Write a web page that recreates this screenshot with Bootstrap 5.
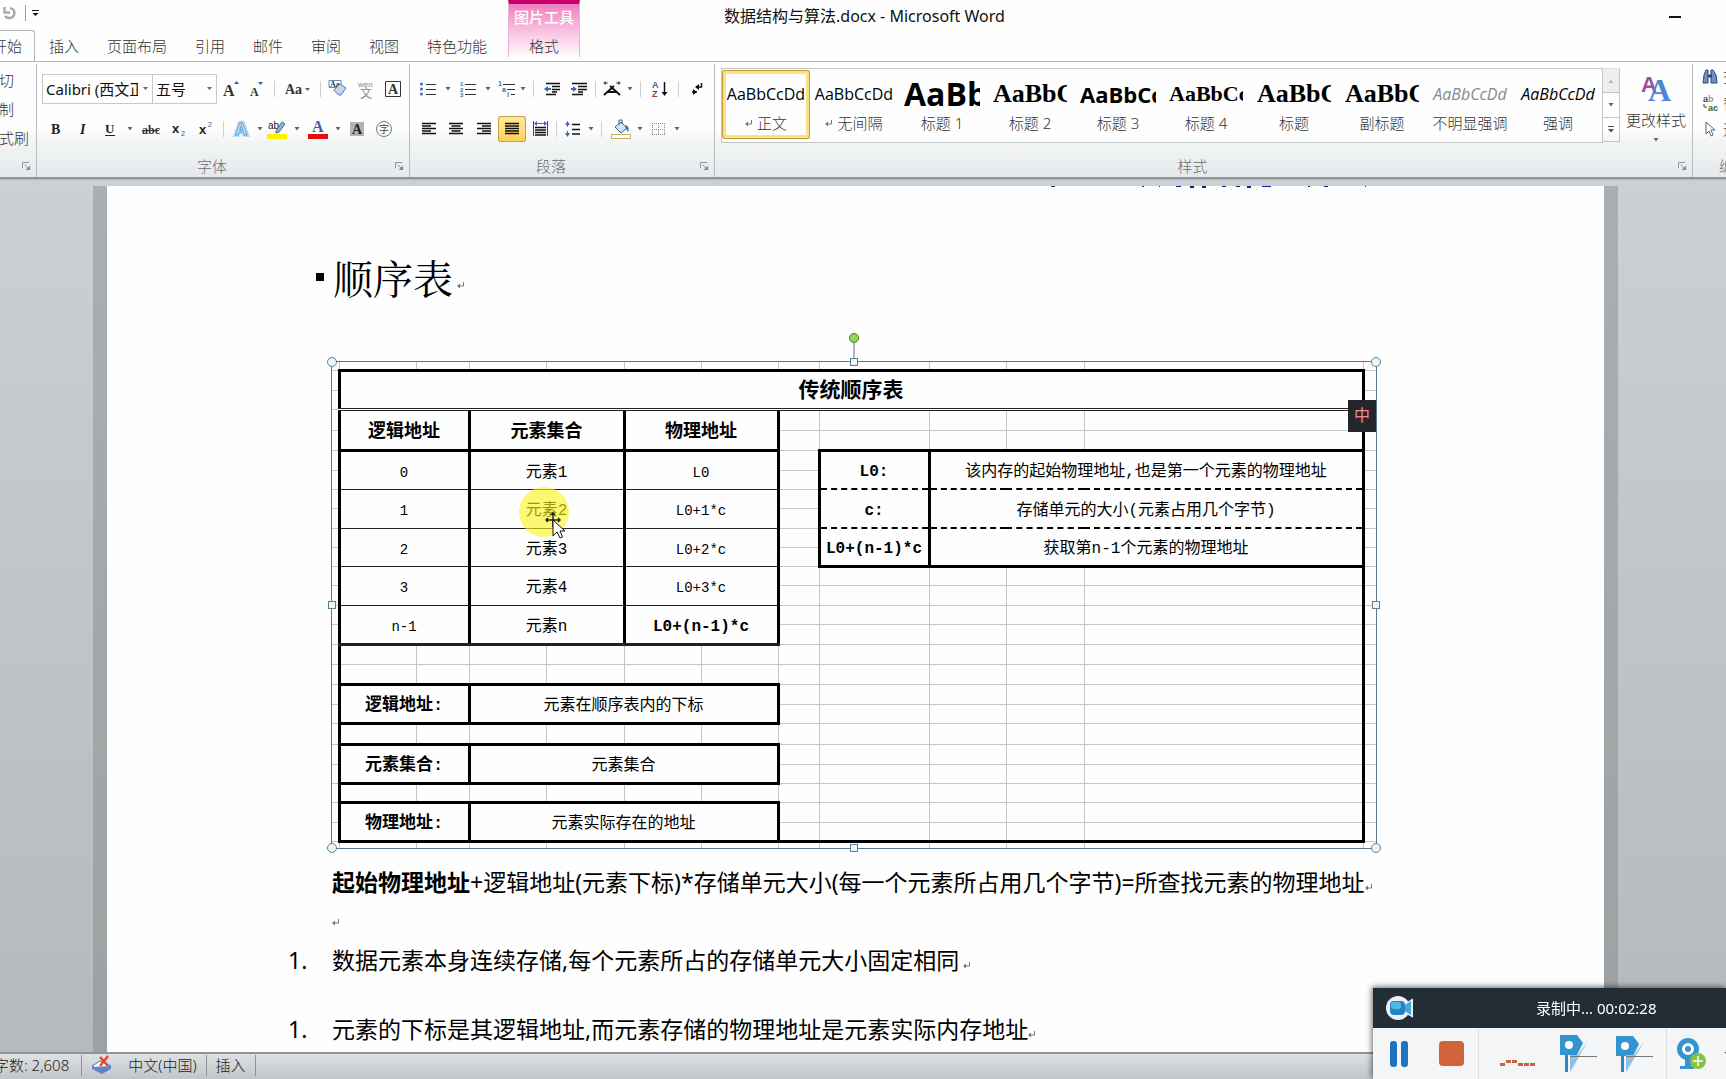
<!DOCTYPE html>
<html lang="zh-CN">
<head>
<meta charset="utf-8">
<meta name="viewport" content="width=device-width, initial-scale=1">
<title>数据结构与算法.docx - Microsoft Word</title>
<link href="https://cdn.jsdelivr.net/npm/bootstrap@5.3.0/dist/css/bootstrap.min.css" rel="stylesheet">
<style>
  body { font-family: "Noto Sans", "Noto Sans CJK SC", sans-serif; font-size: 15px; line-height: 20px; color: #333; background: #fdfefd; }
  button { font: inherit; color: inherit; background: none; border: 0; padding: 0; }
  svg { display: block; flex: none; }
  .cjk { font-family: "Noto Sans", "Noto Sans CJK SC", sans-serif; font-weight: 300; }

  /* title bar and tabs */
  .titlebar { display: grid; grid-template-columns: 508px 72px 1fr; height: 62px; border-bottom: 1px solid #b4b6b8; }
  .tabs { gap: 28px; height: 31px; }
  .tabs a, .ctx a { color: #333; text-decoration: none; white-space: nowrap; padding-top: 6px; }
  .tabs .tab-home { width: 35px; height: 32px; border: 1px solid #b4b6b8; border-left: 0; border-bottom: 0; border-top-right-radius: 3px; background: #fdfefd; padding: 5px 12px 0 0; display: flex; justify-content: flex-end; overflow: hidden; margin-right: -14px; }
  .ctx { background: linear-gradient(#f07ebd, #f9bfe0 50%, #fdf3f9 92%, #fdfefd); border-top: 4px solid #c8006e; border-left: 1px solid #e6b3d0; border-right: 1px solid #e6b3d0; height: 57px; }
  .ctx strong { color: #fff; font-weight: 500; line-height: 26px; }
  .doc-title { color: #111; padding: 6px 0 0 144px; font-size: 16px; }
  .win-min { width: 12px; height: 2px; background: #111; margin: 16px 45px 0 0; }

  /* ribbon */
  .ribbon { height: 117px; background: linear-gradient(#fdfefd 0, #fdfefd 58%, #f2f4f5 70%, #e6e9eb 100%); border-bottom: 2px solid #8f9498; overflow: hidden; }
  .grp { border-right: 1px solid #b9bcc0; height: 113px; margin-top: 2px; flex: none; }
  .grp-body { height: 90px; }
  .tools { padding: 10px 0 0 5px; }
  .grp-foot { height: 24px; color: #6a6f75; padding-right: 5px; }
  .tool-row { height: 30px; }
  .tool-row + .tool-row { margin-top: 10px; }
  .tool-row button { height: 26px; display: flex; align-items: center; justify-content: center; }
  .tool-on { background: linear-gradient(#ffe9a0, #ffd257); border-radius: 3px; box-shadow: inset 0 0 0 1px #c9a04a; }
  .tool-sep { width: 1px; height: 16px; background: #cdd0d3; flex: none; }
  .clip-item { height: 29px; line-height: 29px; white-space: nowrap; }
  .edit-item { height: 26px; gap: 4px; }
  .combo { height: 30px; border: 1px solid #c6c9cc; background: #fff; font-size: 15px; font-weight: 400; color: #111; appearance: none; border-radius: 0; padding: 0 14px 0 3px;
    background: url("data:image/svg+xml,%3Csvg xmlns='http://www.w3.org/2000/svg' width='6' height='4'%3E%3Cpath d='M0 0h5L2.5 3z' fill='%23666'/%3E%3C/svg%3E") no-repeat right 3px center; }
  .gallery { border: 1px solid #c3c6c9; height: 75px; width: 882px; margin-top: 4px; background: #fdfefd; }
  .style-item { width: 88px; height: 69px; margin-top: 1px; display: flex; flex-direction: column; align-items: center; flex: none; }
  .style-on { border-radius: 3px; box-shadow: inset 0 0 0 1px #c29b34, inset 0 0 0 4px #fbe08a; }
  .pv { width: 74px; height: 42px; overflow: hidden; white-space: nowrap; color: #000; line-height: 48px; text-align: left; }
  .pv-open { font-family: "Open Sans", sans-serif; font-weight: 400; width: 76px; }
  .pv-name { font-size: 16px; width: 80px; text-align: center; }
  .pv-serif { font-family: "Liberation Serif", serif; font-weight: 700; }
  .fs-h1 { font-size: 32px; } .fs-h2 { font-size: 26px; } .fs-h3 { font-size: 22px; }
  .style-item small { font-size: 15px; line-height: 22px; color: #333; }
  .gal-scroll { width: 17px; height: 74px; margin-top: 4px; }
  .gal-scroll button { border: 1px solid #c3c6c9; border-left: 0; border-top: 0; flex: 1; display: flex; align-items: center; justify-content: center; }

  /* workspace */
  .work { background: linear-gradient(#ccd0d5, #b5b9bc); border-top: 1px solid #b4b8bc; padding: 6px 108px 0 93px; }
  .sheet { background: #fdfefd; background-clip: padding-box; border: 14px solid rgba(120, 124, 126, .4); border-width: 0 14px; padding-left: 225px; color: #000; overflow: hidden; }
  .head-line { font-family: "Noto Serif CJK SC", "Noto Sans CJK SC", serif; font-weight: 400; font-size: 40px; line-height: 56px; margin: 60px 0 56px -16px; }
  .bullet { width: 8px; height: 8px; background: #000; margin-right: 9px; }
  .para { font-size: 23px; line-height: 39px; white-space: nowrap; margin: 0; font-weight: 400; }
  .num { width: 44px; margin-left: -44px; flex: none; }

  .pic { position: relative; width: fit-content; border: 1px solid #5f7486; margin-bottom: 14px; margin-left: -1px; }
  .cells { border-collapse: collapse; table-layout: fixed; width: 1044px; color: #000; font-family: "Liberation Mono", "Noto Sans CJK SC", monospace; font-size: 16px; line-height: 22px; }
  .cells td { border: 1px solid #c4c5c5; padding: 5px 0 0; text-align: center; vertical-align: middle; font-weight: 400; white-space: nowrap; }
  .cells tr:first-child td, .cells tr:last-child td { padding: 0; }
  .cells tr:first-child td { border-top: 0; } .cells tr:last-child td { border-bottom: 0; }
  .cells .edge-l { border-left: 0; } .cells .edge-r { border-right: 0; }
  .cells .box { border: 3px solid #000; }
  .cells .thin { border: 3px solid #000; border-width: 1px 3px; border-top-color: #222; border-bottom-color: #222; }
  .cells .thin-first { border-top-width: 3px; } .cells .thin-last { border-bottom-width: 3px; }
  .cells .wl { border-left: 3px solid #000; } .cells .wr { border-right: 3px solid #000; } .cells .wb { border-bottom: 3px solid #000; }
  .cells .dbl { border-bottom: 3px double #222; } .cells .dbl-t { border-top: 3px double #222; }
  .cells .dash-b { border-bottom: 2px dashed #000; } .cells .dash-t { border-top: 2px dashed #000; }
  .cells .t-title { font-size: 21px; font-weight: 700; }
  .cells .t-head { font-size: 18px; font-weight: 700; }
  .cells .t-label { font-size: 17px; font-weight: 700; }
  .cells .t-bold { font-weight: 700; font-size: 16px; }
  .cells .t-code { font-size: 14px; }
  .hnd { position: absolute; width: 10px; height: 10px; border: 1px solid #5f7f92; background: #eaf6fa; transform: translate(-50%, -50%); }
  .hnd-r { border-radius: 50%; }
  .hnd-rot { position: absolute; left: 50%; top: -30px; transform: translateX(-50%); }
  .spot { position: absolute; left: 187px; top: 125px; width: 50px; height: 50px; border-radius: 50%; background: rgba(250, 244, 30, .62); }
  .cursor { position: absolute; left: 212px; top: 150px; }
  .ime { position: absolute; right: 0; top: 38px; width: 28px; height: 32px; background: #25262c; color: #ee8d92; text-align: center; line-height: 31px; font-size: 16px; }

  /* status bar */
  .status { height: 27px; background: linear-gradient(#dfe2e4, #c1c5c8); border-top: 2px solid #8f9498; color: #222; white-space: nowrap; line-height: 20px; padding-bottom: 3px; }
  .status .st-sep { width: 1px; height: 21px; background: #8d9195; }

  /* recorder */
  .rec { position: fixed; right: 0; bottom: 0; width: 353px; height: 91px; overflow: hidden; box-shadow: -1px -1px 6px rgba(0, 0, 0, .6); background: #f3f5f6; }
  .rec-top { height: 40px; background: #222d36; color: #fff; }
</style>
</head>
<body class="vh-100 overflow-hidden d-flex flex-column">

<svg width="0" height="0" class="position-absolute">
  <symbol id="caret" viewBox="0 0 6 4"><path d="M.5 0h5L3 3.5z" fill="#666"/></symbol>
  <symbol id="launch" viewBox="0 0 10 10"><path d="M.5 7V.5H8" fill="none" stroke="#888"/><path d="M3 3l4 4" stroke="#888"/><path d="M9 4v5H4z" fill="#888"/></symbol>
  <symbol id="ret" viewBox="0 0 8 8"><path d="M6.500 1v4H2" fill="none" stroke="#777"/><path d="M0 5l3-2.500v5z" fill="#777"/></symbol>
</svg>

<header class="titlebar flex-shrink-0">
  <div class="d-flex flex-column overflow-hidden">
    <div class="d-flex align-items-center" style="height:31px;padding-bottom:4px">
      <button type="button" aria-label="重复" style="margin-left:2px"><svg width="14" height="14" viewBox="0 0 14 14"><path d="M2.500 1v5.500H8" fill="none" stroke="#aaa" stroke-width="2.500"/><path d="M8 2.500C12 2 13 6 12 9c-1 3.500-7 4-9 1" fill="none" stroke="#aaa" stroke-width="2.500"/></svg></button>
      <span class="tool-sep" style="margin-left:9px;background:#999"></span>
      <button type="button" aria-label="自定义" style="margin-left:6px"><svg width="8" height="7" viewBox="0 0 8 7"><path d="M0 0h7v1H0zM.5 3h6L3.500 6z" fill="#111"/></svg></button>
    </div>
    <nav class="tabs cjk d-flex">
      <a class="tab-home" href="#">开始</a>
      <a href="#">插入</a><a href="#">页面布局</a><a href="#">引用</a><a href="#">邮件</a><a href="#">审阅</a><a href="#">视图</a><a href="#">特色功能</a>
    </nav>
  </div>
  <div class="ctx cjk d-flex flex-column align-items-center">
    <strong>图片工具</strong>
    <a href="#">格式</a>
  </div>
  <div class="d-flex justify-content-between align-items-start">
    <div class="doc-title">数据结构与算法.docx - Microsoft Word</div>
    <button type="button" aria-label="最小化" class="win-min"></button>
  </div>
</header>

<section class="ribbon d-flex flex-shrink-0">
  <div class="grp cjk overflow-hidden" style="width:37px">
    <div class="grp-body" style="padding-top:2px">
      <div class="clip-item" style="margin-left:-16px">剪切</div>
      <div class="clip-item" style="margin-left:-16px">复制</div>
      <div class="clip-item" style="margin-left:-16px">格式刷</div>
    </div>
    <div class="grp-foot d-flex align-items-center justify-content-end"><svg width="9" height="9"><use href="#launch"/></svg></div>
  </div>

  <div class="grp" style="width:373px">
    <div class="grp-body tools">
      <div class="tool-row d-flex align-items-center">
        <select class="combo cjk" style="width:111px;margin-right:-1px" aria-label="字体"><option>Calibri (西文正文)</option></select>
        <select class="combo cjk" style="width:65px" aria-label="字号"><option>五号</option></select>
        <button type="button" aria-label="增大字体"><svg width="27" height="20" viewBox="0 0 27 20"><text x="6" y="17" font-family="Liberation Serif" font-weight="700" font-size="16" fill="#333">A</text><path d="M17 5l2.500-3L22 5z" fill="#345a9a"/></svg></button>
        <button type="button" aria-label="缩小字体"><svg width="26" height="20" viewBox="0 0 26 20"><text x="6" y="17" font-family="Liberation Serif" font-weight="700" font-size="12" fill="#333">A</text><path d="M14 3h5l-2.500 3z" fill="#345a9a"/></svg></button>
        <span class="tool-sep mx-1"></span>
        <button type="button" aria-label="更改大小写"><svg width="39" height="20" viewBox="0 0 39 20"><text x="6" y="15" font-family="Liberation Serif" font-weight="700" font-size="14" fill="#333">Aa</text><path d="M26 9h5l-2.500 3z" fill="#666"/></svg></button>
        <span class="tool-sep" style="margin:0 2px"></span>
        <button type="button" aria-label="清除格式"><svg width="30" height="20" viewBox="0 0 30 20"><text x="7" y="8" font-family="Liberation Serif" font-weight="700" font-size="8" fill="#333">Aa</text><path d="M6 1.500h12v7H6z" fill="none" stroke="#6c86b5"/><path d="M11 11l6-6 6 4-5 7q-3 1-7-5z" fill="#c4d4ee" stroke="#5a78ab"/></svg></button>
        <button type="button" aria-label="拼音指南"><svg width="27" height="20" viewBox="0 0 27 20"><text x="5" y="8" font-family="Liberation Sans" font-size="8" fill="#888">wén</text><text x="7" y="19" font-family="Noto Sans CJK SC" font-size="12" fill="#888">文</text></svg></button>
        <button type="button" aria-label="字符边框"><svg width="26" height="20" viewBox="0 0 26 20"><path d="M5.500 2.500h15v15h-15z" fill="#fff" stroke="#334"/><text x="8" y="15" font-family="Liberation Serif" font-weight="700" font-size="14" fill="#333">A</text></svg></button>
      </div>
      <div class="tool-row d-flex align-items-center">
        <button type="button" aria-label="加粗"><svg width="27" height="20"><text x="9" y="15" font-family="Liberation Serif" font-weight="700" font-size="14" fill="#222">B</text></svg></button>
        <button type="button" aria-label="倾斜"><svg width="27" height="20"><text x="11" y="15" font-family="Liberation Serif" font-style="italic" font-weight="700" font-size="14" fill="#222">I</text></svg></button>
        <button type="button" aria-label="下划线"><svg width="27" height="20"><text x="9" y="14" font-family="Liberation Serif" font-weight="700" font-size="13" fill="#222">U</text><path d="M9 16.500h10" stroke="#222"/></svg></button>
        <button type="button" aria-label="下划线选项" style="width:13px"><svg width="6" height="4"><use href="#caret"/></svg></button>
        <button type="button" aria-label="删除线"><svg width="29" height="20"><text x="6" y="15" font-family="Liberation Serif" font-weight="700" font-size="12" fill="#333">abc</text><path d="M6 11.500h17" stroke="#333"/></svg></button>
        <button type="button" aria-label="下标"><svg width="27" height="20"><text x="7" y="14" font-family="Liberation Sans" font-weight="700" font-size="13" fill="#222">x</text><text x="16" y="17" font-family="Liberation Sans" font-size="7" fill="#2f57a0">2</text></svg></button>
        <button type="button" aria-label="上标"><svg width="27" height="20"><text x="7" y="15" font-family="Liberation Sans" font-weight="700" font-size="13" fill="#222">x</text><text x="16" y="8" font-family="Liberation Sans" font-size="7" fill="#2f57a0">2</text></svg></button>
        <span class="tool-sep mx-1"></span>
        <button type="button" aria-label="文本效果"><svg width="27" height="20"><text x="7" y="16" font-family="Liberation Sans" font-weight="700" font-size="17" fill="#fff" stroke="#b7dcf3" stroke-width="4">A</text><text x="7" y="16" font-family="Liberation Sans" font-weight="700" font-size="17" fill="#eef8ff" stroke="#5b9fd0">A</text></svg></button>
        <button type="button" aria-label="文本效果选项" style="width:9px"><svg width="6" height="4"><use href="#caret"/></svg></button>
        <button type="button" aria-label="突出显示"><svg width="26" height="22"><text x="4" y="11" font-family="Liberation Sans" font-size="10" fill="#222">ab</text><path d="M12 13l6-9 3 2-6 8-3 1z" fill="#9db3da" stroke="#47618f"/><path d="M3 16h20v5H3z" fill="#fff200"/></svg></button>
        <button type="button" aria-label="突出显示选项" style="width:13px"><svg width="6" height="4"><use href="#caret"/></svg></button>
        <button type="button" aria-label="字体颜色"><svg width="29" height="22"><text x="9" y="14" font-family="Liberation Serif" font-weight="700" font-size="16" fill="#3b5f9e">A</text><path d="M5 16h20v5H5z" fill="#e60c0c"/></svg></button>
        <button type="button" aria-label="字体颜色选项" style="width:11px"><svg width="6" height="4"><use href="#caret"/></svg></button>
        <button type="button" aria-label="字符底纹"><svg width="28" height="20"><path d="M7 3h14v14H7z" fill="#b3b3b3"/><text x="9" y="15" font-family="Liberation Serif" font-weight="700" font-size="14" fill="#222">A</text></svg></button>
        <button type="button" aria-label="带圈字符"><svg width="26" height="20"><circle cx="13" cy="10" r="7.500" fill="none" stroke="#777"/><text x="8" y="14" font-family="Noto Sans CJK SC" font-size="10" fill="#444">字</text></svg></button>
      </div>
    </div>
    <div class="grp-foot cjk d-flex align-items-center"><span class="flex-fill text-center pe-2">字体</span><svg width="9" height="9"><use href="#launch"/></svg></div>
  </div>

  <div class="grp" style="width:305px">
    <div class="grp-body tools">
      <div class="tool-row d-flex align-items-center">
        <button type="button" aria-label="项目符号"><svg width="26" height="18"><path d="M11 4.500h10M11 9.500h10M11 14.500h10" stroke="#333"/><g fill="#3f69b5"><circle cx="6.500" cy="4" r="1.500"/><circle cx="6.500" cy="9" r="1.500"/><circle cx="6.500" cy="14" r="1.500"/></g></svg></button>
        <button type="button" aria-label="项目符号选项" style="width:13px"><svg width="6" height="4"><use href="#caret"/></svg></button>
        <button type="button" aria-label="编号"><svg width="27" height="18"><path d="M11 4.500h11M11 9.500h11M11 14.500h11" stroke="#333"/><g fill="#3f69b5" font-family="Liberation Sans" font-weight="700" font-size="6"><text x="6" y="6">1</text><text x="6" y="12">2</text><text x="6" y="17">3</text></g></svg></button>
        <button type="button" aria-label="编号选项" style="width:13px"><svg width="6" height="4"><use href="#caret"/></svg></button>
        <button type="button" aria-label="多级列表"><svg width="24" height="18"><path d="M9 4.500h12M13 9.500h8M17 14.500h4" stroke="#333"/><g fill="#3f69b5" font-family="Liberation Sans" font-weight="700" font-size="7"><text x="4" y="6">1</text><text x="8" y="12">a</text><text x="13" y="17">i</text></g></svg></button>
        <button type="button" aria-label="多级列表选项" style="width:10px"><svg width="6" height="4"><use href="#caret"/></svg></button>
        <span class="tool-sep" style="margin:0 5px"></span>
        <button type="button" aria-label="减少缩进"><svg width="27" height="18"><path d="M7 3.500h14M13 6.500h8M13 9.500h8M13 12h5M7 14.500h10" stroke="#111" stroke-width="1.500"/><path d="M5 9l4-3v6z" fill="#3f69b5"/><path d="M8 9h4" stroke="#3f69b5" stroke-width="2"/></svg></button>
        <button type="button" aria-label="增加缩进"><svg width="26" height="18"><path d="M6 3.500h15M12 6.500h9M12 9.500h9M12 12h5M6 14.500h11" stroke="#111" stroke-width="1.500"/><path d="M11 9L7 6v6z" fill="#3f69b5"/><path d="M5 9h4" stroke="#3f69b5" stroke-width="2"/></svg></button>
        <span class="tool-sep" style="margin:0 3px"></span>
        <button type="button" aria-label="中文版式"><svg width="26" height="18"><path d="M5 15L15 6M21 15L11 6M9 12h8" stroke="#111" stroke-width="2"/><path d="M5 3h4M17 3h4" stroke="#3c4c80"/><path d="M4 3l3-2v4zM22 3l-3-2v4z" fill="#3c4c80"/></svg></button>
        <button type="button" aria-label="中文版式选项" style="width:10px"><svg width="6" height="4"><use href="#caret"/></svg></button>
        <span class="tool-sep" style="margin:0 5px"></span>
        <button type="button" aria-label="排序"><svg width="28" height="18"><g font-family="Liberation Sans" font-weight="700" font-size="9"><text x="6" y="8" fill="#3f69b5">A</text><text x="6" y="17" fill="#9b3a35">Z</text></g><path d="M18.500 2v12" stroke="#111" stroke-width="1.500"/><path d="M15.500 12h6l-3 4z" fill="#111"/></svg></button>
        <span class="tool-sep mx-1"></span>
        <button type="button" aria-label="显示编辑标记"><svg width="28" height="18"><path d="M18.500 3v4H13M14 12H9" fill="none" stroke="#111" stroke-width="1.500"/><path d="M12 7l4-3v6zM14 12l-4-3v6z" fill="#111"/></svg></button>
      </div>
      <div class="tool-row d-flex align-items-center">
        <button type="button" aria-label="左对齐"><svg width="27" height="18"><path d="M7 3.500h14M7 6h9M7 8.500h14M7 11h9M7 13.500h14" stroke="#111" stroke-width="1.300"/></svg></button>
        <button type="button" aria-label="居中"><svg width="28" height="18"><path d="M7 3.500h14M9.500 6h9M7 8.500h14M9.500 11h9M7 13.500h14" stroke="#111" stroke-width="1.300"/></svg></button>
        <button type="button" aria-label="右对齐"><svg width="28" height="18"><path d="M7 3.500h14M12 6h9M7 8.500h14M12 11h9M7 13.500h14" stroke="#111" stroke-width="1.300"/></svg></button>
        <button type="button" aria-label="两端对齐" class="tool-on"><svg width="28" height="18"><path d="M7 3.500h14M7 6h14M7 8.500h14M7 11h14M7 13.500h14" stroke="#111" stroke-width="1.300"/></svg></button>
        <button type="button" aria-label="分散对齐"><svg width="27" height="18"><path d="M7.500 1v15M21.500 1v15" stroke="#445"/><path d="M9 3.500h11" stroke="#3f69b5"/><path d="M8 3.500l3-2.500v5zM21 3.500l-3-2.500v5z" fill="#3f69b5"/><path d="M9 7.500h11M9 10h11M9 12.500h11M9 15h11" stroke="#111" stroke-width="1.300"/></svg></button>
        <span class="tool-sep" style="margin:0 3px"></span>
        <button type="button" aria-label="行距"><svg width="26" height="18"><path d="M12 4.500h8M12 9.500h8M12 14h8" stroke="#111" stroke-width="1.500"/><path d="M7.500 3v12" stroke="#3f69b5" stroke-dasharray="4 4"/><path d="M5 5l2.500-4L10 5zM5 13l2.500 4L10 13z" fill="#3f69b5"/></svg></button>
        <button type="button" aria-label="行距选项" style="width:10px"><svg width="6" height="4"><use href="#caret"/></svg></button>
        <span class="tool-sep" style="margin:0 5px"></span>
        <button type="button" aria-label="底纹"><svg width="28" height="20"><path d="M8 8l6-5 6 6-6 5z" fill="#d5e1f2" stroke="#3d5f97"/><path d="M12 6V1h3v4" fill="none" stroke="#3d5f97"/><path d="M19 6q4 2 2 7l-3-5z" fill="#3f69b5"/><path d="M4.500 15.500h19v4h-19z" fill="#fff" stroke="#b5b46a"/></svg></button>
        <button type="button" aria-label="底纹选项" style="width:9px"><svg width="6" height="4"><use href="#caret"/></svg></button>
        <button type="button" aria-label="边框"><svg width="28" height="18"><path d="M8.500 3v12M14.500 3v12M20.500 3v12M8 3.500h13M8 9.500h13M8 14.500h13" stroke="#888" stroke-dasharray="1 1"/></svg></button>
        <button type="button" aria-label="边框选项" style="width:10px"><svg width="6" height="4"><use href="#caret"/></svg></button>
      </div>
    </div>
    <div class="grp-foot cjk d-flex align-items-center"><span class="flex-fill text-center pe-2">段落</span><svg width="9" height="9"><use href="#launch"/></svg></div>
  </div>

  <div class="grp" style="width:978px">
    <div class="grp-body d-flex" style="padding-left:6px">
      <div class="gallery d-flex cjk">
        <button type="button" class="style-item style-on"><span class="pv pv-open pv-name">AaBbCcDd</span><small class="d-flex align-items-center gap-1"><svg width="8" height="8"><use href="#ret"/></svg>正文</small></button>
        <button type="button" class="style-item"><span class="pv pv-open pv-name">AaBbCcDd</span><small class="d-flex align-items-center gap-1"><svg width="8" height="8"><use href="#ret"/></svg>无间隔</small></button>
        <button type="button" class="style-item"><span class="pv pv-open fs-h1 fw-bold">AaBb</span><small>标题 1</small></button>
        <button type="button" class="style-item"><span class="pv pv-serif fs-h2">AaBbC</span><small>标题 2</small></button>
        <button type="button" class="style-item"><span class="pv pv-open fs-h3 fw-bold">AaBbCc</span><small>标题 3</small></button>
        <button type="button" class="style-item"><span class="pv pv-serif fs-h3">AaBbCc</span><small>标题 4</small></button>
        <button type="button" class="style-item"><span class="pv pv-serif fs-h2">AaBbC</span><small>标题</small></button>
        <button type="button" class="style-item"><span class="pv pv-serif fs-h2">AaBbC</span><small>副标题</small></button>
        <button type="button" class="style-item"><span class="pv pv-open pv-name fst-italic" style="color:#888">AaBbCcDd</span><small>不明显强调</small></button>
        <button type="button" class="style-item"><span class="pv pv-open pv-name fst-italic">AaBbCcDd</span><small>强调</small></button>
      </div>
      <div class="gal-scroll d-flex flex-column border-top">
        <button type="button" aria-label="上一行" style="background:#eceeef"><svg width="6" height="4" viewBox="0 0 6 4"><path d="M.5 4h5L3 .5z" fill="#b5b8bb"/></svg></button>
        <button type="button" aria-label="下一行"><svg width="6" height="4"><use href="#caret"/></svg></button>
        <button type="button" aria-label="更多"><svg width="8" height="7" viewBox="0 0 8 7"><path d="M1 0h6v1H1zM1 3h6L4 6.500z" fill="#555"/></svg></button>
      </div>
      <button type="button" class="cjk flex-fill d-flex flex-column align-items-center pt-2 text-nowrap">
        <svg width="30" height="30" viewBox="0 0 30 30"><text x="0" y="20" font-family="Liberation Sans" font-weight="700" font-size="22" fill="#a04fa5">A</text><text x="7" y="29" font-family="Liberation Serif" font-weight="700" font-size="32" fill="#4b86d3">A</text></svg>
        <span class="mt-2">更改样式</span>
        <svg width="6" height="4" class="mt-2"><use href="#caret"/></svg>
      </button>
    </div>
    <div class="grp-foot cjk d-flex align-items-center"><span class="flex-fill text-center pe-2">样式</span><svg width="9" height="9"><use href="#launch"/></svg></div>
  </div>

  <div class="flex-fill overflow-hidden cjk text-nowrap">
    <div class="ps-2" style="height:92px;padding-top:2px">
      <div class="edit-item d-flex align-items-center"><svg width="18" height="18"><path d="M3 7l2-5h2v13H2zM10 2h2l3 5 1 8h-6z" fill="#6f8fc8" stroke="#2f4677"/><path d="M7 8h4" stroke="#2f4677" stroke-width="3"/></svg>查找</div>
      <div class="edit-item d-flex align-items-center"><svg width="18" height="18"><g font-family="Liberation Sans" font-weight="700" font-size="9"><text x="2" y="8" fill="#444">a<tspan fill="#999">b</tspan></text><text x="7" y="17" fill="#2d6a35">ac</text></g><path d="M3 10v3h3" fill="none" stroke="#444"/></svg>替换</div>
      <div class="edit-item d-flex align-items-center"><svg width="18" height="18"><path d="M5 2v12l3-3 2 5 2-1-2-5h4z" fill="#fff" stroke="#567"/></svg>选择</div>
    </div>
    <div class="grp-foot d-flex align-items-center" style="padding-left:26px">编辑</div>
  </div>
</section>

<main class="work flex-fill d-flex overflow-hidden" style="min-height:0">
  <article class="sheet flex-fill">
    <svg class="ms-auto" width="340" height="3" viewBox="0 0 340 3" style="margin-right:224px"><path d="M11 0h4v1h-4zM102 0h2v1h-2zM119 0h1v1h-1z" fill="#333"/><path d="M136 0h5v1h-5zM150 0h4v2h-4zM162 0h4v2h-4zM182 0h4v1h-4zM196 0h4v1h-4zM207 0h4v2h-4zM222 0h9v1h-9zM268 0h2v1h-2zM284 0h4v1h-4zM325 0h1v1h-1z" fill="#1a1a8c"/></svg>
    <h1 class="head-line d-flex align-items-center"><span class="bullet"></span>顺序表<svg width="8" height="8" class="mt-3 ms-1"><use href="#ret"/></svg></h1>

    <figure class="pic">
      <table class="cells" id="cells"></table>
      <span class="spot"></span>
      <svg class="cursor" width="22" height="30" viewBox="0 0 22 30"><path d="M9 1v14M2 8h14M7 3l2-2 2 2M4 6L2 8l2 2M14 6l2 2-2 2" fill="none" stroke="#222" stroke-width="1.500"/><path d="M9 8v16l4-4 3 6 2.500-1-2.500-6h5z" fill="#fff" stroke="#111"/></svg>
      <span class="ime">中</span>
      <svg class="hnd-rot" width="12" height="30" viewBox="0 0 12 30"><path d="M6 10v20" stroke="#5f7486"/><circle cx="6" cy="6" r="4.500" fill="#8fd850" stroke="#4d7a2c"/></svg>
      <span class="hnd hnd-r" style="left:0;top:0"></span><span class="hnd hnd-r" style="left:100%;top:0"></span>
      <span class="hnd hnd-r" style="left:0;top:100%"></span><span class="hnd hnd-r" style="left:100%;top:100%"></span>
      <span class="hnd" style="left:50%;top:0;width:8px;height:8px"></span><span class="hnd" style="left:50%;top:100%;width:8px;height:8px"></span>
      <span class="hnd" style="left:0;top:50%;width:8px;height:8px"></span><span class="hnd" style="left:100%;top:50%;width:8px;height:8px"></span>
    </figure>

    <p class="para d-flex align-items-center"><span><b>起始物理地址</b>+逻辑地址(元素下标)*存储单元大小(每一个元素所占用几个字节)=所查找元素的物理地址</span><svg width="8" height="8" class="mt-2"><use href="#ret"/></svg></p>
    <p class="para d-flex align-items-center" style="height:39px"><svg width="8" height="8"><use href="#ret"/></svg></p>
    <p class="para d-flex align-items-center"><span class="num">1.</span>数据元素本身连续存储,每个元素所占的存储单元大小固定相同<svg width="8" height="8" class="mt-2 ms-1"><use href="#ret"/></svg></p>
    <p class="para d-flex align-items-center" style="margin-top:30px"><span class="num">1.</span>元素的下标是其逻辑地址,而元素存储的物理地址是元素实际内存地址<svg width="8" height="8" class="mt-2"><use href="#ret"/></svg></p>
  </article>
</main>

<footer class="status cjk d-flex align-items-center flex-shrink-0">
  <span style="margin-left:-6px">字数: 2,608</span>
  <span class="st-sep" style="margin-left:12px"></span>
  <svg style="margin-left:9px" width="22" height="20" viewBox="0 0 22 20"><path d="M1 11l8-5 11 5-8 6z" fill="#fff" stroke="#5474a8"/><path d="M1 12v2l10 5 9-5v-3" fill="#5f86c4"/><path d="M9 2l8 9M17 1L9 11" stroke="#e04a2d" stroke-width="2.500"/></svg>
  <span style="margin-left:15px">中文(中国)</span>
  <span class="st-sep" style="margin-left:9px"></span>
  <span style="margin-left:9px">插入</span>
  <span class="st-sep" style="margin-left:9px"></span>
</footer>

<aside class="rec">
  <div class="rec-top d-flex align-items-center">
    <svg width="30" height="28" viewBox="0 0 30 28" style="margin-left:12px"><path d="M18 12l9-6v16l-9-5z" fill="#4aa6d8" stroke="#e8eef8" stroke-width="2"/><circle cx="13" cy="14" r="12" fill="#f1eefa"/><path d="M18 12l8-5v14l-8-5z" fill="#4aa6d8"/><rect x="5" y="7" width="15" height="14" rx="4" fill="#2583c4"/><rect x="6" y="8" width="10" height="7" rx="3" fill="#49c0e0"/></svg>
    <span class="cjk" style="margin-left:121px;font-weight:400">录制中... 00:02:28</span>
  </div>
  <div class="d-flex align-items-center" style="height:51px">
    <button type="button" aria-label="暂停" style="margin-left:17px"><svg width="18" height="26"><rect width="7" height="26" rx="3" fill="#1f73bf"/><rect x="11" width="7" height="26" rx="3" fill="#1f73bf"/></svg></button>
    <button type="button" aria-label="停止" style="margin-left:31px"><svg width="25" height="25"><rect width="25" height="25" rx="4" fill="#d1633b"/></svg></button>
    <span class="tool-sep h-100" style="margin-left:14px;background:#dcdfe2"></span>
    <svg width="36" height="30" style="margin-left:21px"><path d="M0 24h5v3H0zM6 21h5v3H6zM12 21h5v3h-5zM18 24h5v3h-5zM24 24h5v3h-5zM30 24h5v3h-5z" fill="#c9633f"/></svg>
    <button type="button" aria-label="画笔" style="margin-left:24px"><svg width="38" height="38"><path d="M0 0h17l6 8-6 12H0z" fill="#3394cf"/><path d="M28 6L10 37V20h8z" fill="#8fc1e3"/><path d="M6.500 20v17" stroke="#2f87c4" stroke-width="3"/><circle cx="9" cy="10" r="4" fill="#fff"/><path d="M10 21.500h27" stroke="#777"/></svg></button>
    <button type="button" aria-label="标注" style="margin-left:18px"><svg width="38" height="38"><path d="M0 1h17l6 8-6 12H0z" fill="#3394cf"/><path d="M28 7L10 37V20h8z" fill="#8fc1e3"/><path d="M6.500 20v17" stroke="#2f87c4" stroke-width="3"/><circle cx="9" cy="11" r="4" fill="#fff"/><path d="M10 21.500h27" stroke="#777"/></svg></button>
    <span class="tool-sep h-100" style="margin-left:12px;background:#dcdfe2"></span>
    <button type="button" aria-label="摄像头" style="margin-left:10px"><svg width="30" height="32"><circle cx="11" cy="11" r="8.500" fill="#fff" stroke="#3394cf" stroke-width="5"/><circle cx="11" cy="11" r="3" fill="#3394cf"/><path d="M3 28h14v3H3zM8 20h6v9H8z" fill="#3394cf"/><circle cx="21" cy="23" r="8" fill="#84c440"/><path d="M16 23h10M21 18v10" stroke="#fff" stroke-width="1.500"/></svg></button>
    <svg width="6" height="4" style="margin-left:17px"><use href="#caret"/></svg>
  </div>
</aside>

<script src="https://cdn.jsdelivr.net/npm/bootstrap@5.3.0/dist/js/bootstrap.bundle.min.js"></script>
<script>
  // Worksheet: column widths, row heights, then the merged cells; every other position is an empty grid cell.
  const cols = [7, 77, 53, 77, 78, 77, 77, 41, 110, 77, 78, 279, 13];
  const rows = [8, 20, 19, 21, 20, 20, 19, 19, 20, 19, 19, 19, 20, 19, 20, 20, 20, 20, 19, 21, 20, 19, 19, 20, 19, 7];
  const cells = [
    [1, 1, 2, 11, '传统顺序表', 'box dbl t-title'],
    [3, 1, 2, 2, '逻辑地址', 'box dbl-t t-head'], [3, 3, 2, 2, '元素集合', 'box dbl-t t-head'], [3, 5, 2, 2, '物理地址', 'box dbl-t t-head'],
    [17, 1, 2, 2, '逻辑地址:', 'box t-label'], [17, 3, 2, 4, '元素在顺序表内的下标', 'box'],
    [20, 1, 2, 2, '元素集合:', 'box t-label'], [20, 3, 2, 4, '元素集合', 'box'],
    [23, 1, 2, 2, '物理地址:', 'box t-label'], [23, 3, 2, 4, '元素实际存在的地址', 'box'],
    [5, 8, 2, 1, 'L0:', 'box dash-b t-bold'], [5, 9, 2, 3, '该内存的起始物理地址,也是第一个元素的物理地址', 'box dash-b'],
    [7, 8, 2, 1, 'c:', 'box dash-b dash-t t-bold'], [7, 9, 2, 3, '存储单元的大小(元素占用几个字节)', 'box dash-b dash-t'],
    [9, 8, 2, 1, 'L0+(n-1)*c', 'box dash-t t-bold'], [9, 9, 2, 3, '获取第n-1个元素的物理地址', 'box dash-t']
  ];
  [['0', '元素1', 'L0'], ['1', '元素2', 'L0+1*c'], ['2', '元素3', 'L0+2*c'], ['3', '元素4', 'L0+3*c'], ['n-1', '元素n', 'L0+(n-1)*c']].forEach((line, i) => {
    const edge = 'thin' + (i === 0 ? ' thin-first' : '') + (i === 4 ? ' thin-last' : '');
    line.forEach((t, k) => cells.push([5 + 2 * i, 1 + 2 * k, 2, 2, t, edge + (k === 1 ? '' : i === 4 && k === 2 ? ' t-bold' : ' t-code')]));
  });
  const table = document.getElementById('cells');
  const group = table.appendChild(document.createElement('colgroup'));
  cols.forEach(w => { group.appendChild(document.createElement('col')).style.width = w + 'px'; });
  const taken = new Set();
  rows.forEach((h, r) => {
    const tr = table.insertRow();
    tr.style.height = h + 'px';
    cols.forEach((_, c) => {
      if (taken.has(r + '.' + c)) return;
      const def = cells.find(d => d[0] === r && d[1] === c);
      const td = tr.insertCell();
      if (def) {
        td.rowSpan = def[2]; td.colSpan = def[3]; td.textContent = def[4]; td.className = def[5];
        for (let y = 0; y < def[2]; y++) for (let x = 0; x < def[3]; x++) taken.add((r + y) + '.' + (c + x));
      } else {
        const inside = r > 0 && r < 25;
        if (c === 0) td.classList.add('edge-l');
        if (c === 12) td.classList.add('edge-r');
        if (inside && c === 1) td.classList.add('wl');
        if (inside && c === 11) td.classList.add('wr');
        if (r === 24 && c > 0 && c < 12) td.classList.add('wb');
      }
    });
  });
</script>
</body>
</html>
